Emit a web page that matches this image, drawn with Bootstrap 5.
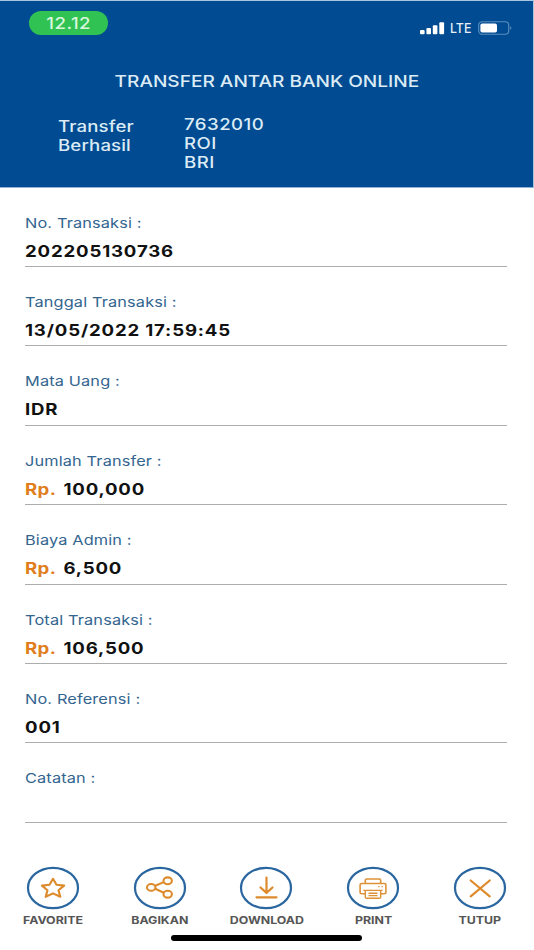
<!DOCTYPE html>
<html lang="id">
<head>
<meta charset="utf-8">
<meta name="viewport" content="width=device-width, initial-scale=1">
<title>Transfer Antar Bank Online</title>
<link href="https://cdn.jsdelivr.net/npm/bootstrap@5.3.0/dist/css/bootstrap.min.css" rel="stylesheet">
<style>
body{font-family:Inter,"Liberation Sans",sans-serif;background:#fff;height:950px;overflow:hidden}
.hero{background:#004b91;height:187.6px;border-top:1px solid #a9c6e0;border-right:1px solid #a9c6e0;color:#dcebf5;border-bottom:1px solid #8fb4d6}
.wide{display:inline-block;transform:scaleX(1.2);transform-origin:0 50%;white-space:nowrap}
.wide-c{transform-origin:50% 50%}
.status{height:52px;padding:10px 21px 0 29px}
.clock{width:79px;height:24px;border-radius:12px;background:#31c254;color:#d9f7dc;font-size:15.5px;font-weight:500;letter-spacing:.4px;padding-top:2px}
.signals{margin-top:8.5px;height:16px;color:#e8f1f8}
.lte{font-size:13px;width:24px;line-height:16px;font-weight:500;transform:scaleX(.95)}
.title-line{font-size:15.9px;line-height:20px;margin-top:19px;font-weight:500}
.summary{font-size:15.5px;line-height:19px;margin-top:23px;padding-left:58px;font-weight:500;letter-spacing:.12px}
.summary-state{width:126px;padding-top:2px}
.account{letter-spacing:.4px}
.field{height:79.4px;border-bottom:1.4px solid #adadad;margin:0 27px 0 25px}
.field-name{font-size:13.6px;line-height:18px;color:#33658f;height:18px;letter-spacing:.12px}
.field-value{font-size:15.5px;line-height:20px;height:20px;font-weight:700;color:#111;margin:10px 0 4.4px;letter-spacing:.7px}
.rp{color:#e07d1c;letter-spacing:.3px;margin-right:1.6px}
.actions{margin-top:43px;margin-right:1px}
.action svg{display:block;width:54px;height:44px}
.action-name{font-size:10.3px;line-height:14px;font-weight:700;color:#555;margin-top:3.4px}
.home-bar{width:191px;height:5.5px;border-radius:3px;background:#000;margin:8px 0 0 171px}
</style>
</head>
<body>
<header class="hero">
  <div class="status d-flex justify-content-between align-items-start">
    <div class="clock d-flex align-items-center justify-content-center"><span class="wide wide-c">12.12</span></div>
    <div class="signals d-flex align-items-center">
      <svg width="26" height="14" viewBox="0 0 26 14" fill="#fff"><rect x="0" y="9" width="4.6" height="4.3" rx="1"/><rect x="6.4" y="7" width="4.6" height="6.3" rx="1"/><rect x="12.8" y="4.2" width="4.6" height="9.1" rx="1"/><rect x="19.3" y="1.3" width="4.8" height="12" rx="1"/></svg>
      <span class="lte wide ms-1">LTE</span>
      <svg class="ms-1" width="34" height="14" viewBox="0 0 34 14"><rect x=".7" y=".7" width="30" height="12.6" rx="3.5" fill="none" stroke="#5b8fc0" stroke-width="1.1"/><rect x="2.4" y="2.4" width="16.6" height="9.2" rx="1.8" fill="#fff"/><path d="M32.3 5v4q2-2 0-4z" fill="#6f9cc7"/></svg>
    </div>
  </div>
  <div class="title-line text-center"><span class="wide wide-c">TRANSFER ANTAR BANK ONLINE</span></div>
  <div class="summary d-flex">
    <div class="summary-state"><span class="wide">Transfer<br>Berhasil</span></div>
    <div class="account"><span class="wide">7632010<br>ROI<br>BRI</span></div>
  </div>
</header>
<main>
  <div class="field d-flex flex-column justify-content-end"><div class="field-name"><span class="wide">No. Transaksi :</span></div><div class="field-value"><span class="wide">202205130736</span></div></div>
  <div class="field d-flex flex-column justify-content-end"><div class="field-name"><span class="wide">Tanggal Transaksi :</span></div><div class="field-value"><span class="wide">13/05/2022 17:59:45</span></div></div>
  <div class="field d-flex flex-column justify-content-end"><div class="field-name"><span class="wide">Mata Uang :</span></div><div class="field-value"><span class="wide">IDR</span></div></div>
  <div class="field d-flex flex-column justify-content-end"><div class="field-name"><span class="wide">Jumlah Transfer :</span></div><div class="field-value"><span class="wide"><span class="rp">Rp.</span> 100,000</span></div></div>
  <div class="field d-flex flex-column justify-content-end"><div class="field-name"><span class="wide">Biaya Admin :</span></div><div class="field-value"><span class="wide"><span class="rp">Rp.</span> 6,500</span></div></div>
  <div class="field d-flex flex-column justify-content-end"><div class="field-name"><span class="wide">Total Transaksi :</span></div><div class="field-value"><span class="wide"><span class="rp">Rp.</span> 106,500</span></div></div>
  <div class="field d-flex flex-column justify-content-end"><div class="field-name"><span class="wide">No. Referensi :</span></div><div class="field-value"><span class="wide">001</span></div></div>
  <div class="field d-flex flex-column justify-content-end"><div class="field-name"><span class="wide">Catatan :</span></div><div class="field-value"></div></div>
</main>
<footer>
  <div class="actions row row-cols-5 g-0">
    <div class="action col d-flex flex-column align-items-center">
      <svg viewBox="0 0 54 44" fill="none"><ellipse cx="27" cy="22" rx="25" ry="20.2" stroke="#2a669f" stroke-width="2.2"/><path d="M27 12.8l3.5 6 7.6.8-5.6 4.6 1.8 6.6-7.3-3.4-7.3 3.4 1.8-6.6-5.6-4.6 7.6-.8z" stroke="#dd8a2b" stroke-width="2.1" stroke-linejoin="round"/></svg>
      <div class="action-name"><span class="wide wide-c">FAVORITE</span></div>
    </div>
    <div class="action col d-flex flex-column align-items-center">
      <svg viewBox="0 0 54 44" fill="none"><ellipse cx="27" cy="22" rx="25" ry="20.2" stroke="#2a669f" stroke-width="2.2"/><g stroke="#dd8a2b" stroke-width="2.1"><path d="M22.2 19.8l8.6-3.7M22.2 22.8l8.6 4"/><ellipse cx="18.2" cy="21.4" rx="4.2" ry="3.4"/><ellipse cx="34.7" cy="14.8" rx="4.2" ry="3.4"/><ellipse cx="34.7" cy="28.2" rx="4.2" ry="3.4"/></g></svg>
      <div class="action-name"><span class="wide wide-c">BAGIKAN</span></div>
    </div>
    <div class="action col d-flex flex-column align-items-center">
      <svg viewBox="0 0 54 44" fill="none"><ellipse cx="27" cy="22" rx="25" ry="20.2" stroke="#2a669f" stroke-width="2.2"/><path d="M27.5 11.5v15M21.5 21.5l6 5.4 6-5.4M17.5 31.3h20" stroke="#dd8a2b" stroke-width="2.2" stroke-linecap="round" stroke-linejoin="round"/></svg>
      <div class="action-name"><span class="wide wide-c">DOWNLOAD</span></div>
    </div>
    <div class="action col d-flex flex-column align-items-center">
      <svg viewBox="0 0 54 44" fill="none"><ellipse cx="27" cy="22" rx="25" ry="20.2" stroke="#2a669f" stroke-width="2.2"/><g stroke="#dd9237" stroke-width="1.6" stroke-linejoin="round"><path d="M19.3 17.5v-3.3q0-1.2 1.4-1.2h12.6q1.4 0 1.4 1.2v3.3M19.3 27.7h-3.8q-1.4 0-1.4-1.2v-7.8q0-1.2 1.4-1.2h23q1.4 0 1.4 1.2v7.8q0 1.2-1.4 1.2h-3.8"/><path d="M19.3 24.4h15.4v6.6q0 1.2-1.4 1.2H20.7q-1.4 0-1.4-1.2zM17.3 24.4h19.4M22.5 27.2h9M22.5 29.6h9M32.2 20.6h1.4M35.4 20.6h1.4" stroke-width="1.4"/></g></svg>
      <div class="action-name"><span class="wide wide-c">PRINT</span></div>
    </div>
    <div class="action col d-flex flex-column align-items-center">
      <svg viewBox="0 0 54 44" fill="none"><ellipse cx="27" cy="22" rx="25" ry="20.2" stroke="#2a669f" stroke-width="2.2"/><path d="M17.7 14.5l19 15.8M36.7 14.5l-19 15.8" stroke="#dd8a2b" stroke-width="2.2" stroke-linecap="round"/></svg>
      <div class="action-name"><span class="wide wide-c">TUTUP</span></div>
    </div>
  </div>
  <div class="home-bar"></div>
</footer>
<script src="https://cdn.jsdelivr.net/npm/bootstrap@5.3.0/dist/js/bootstrap.bundle.min.js"></script>
</body>
</html>
